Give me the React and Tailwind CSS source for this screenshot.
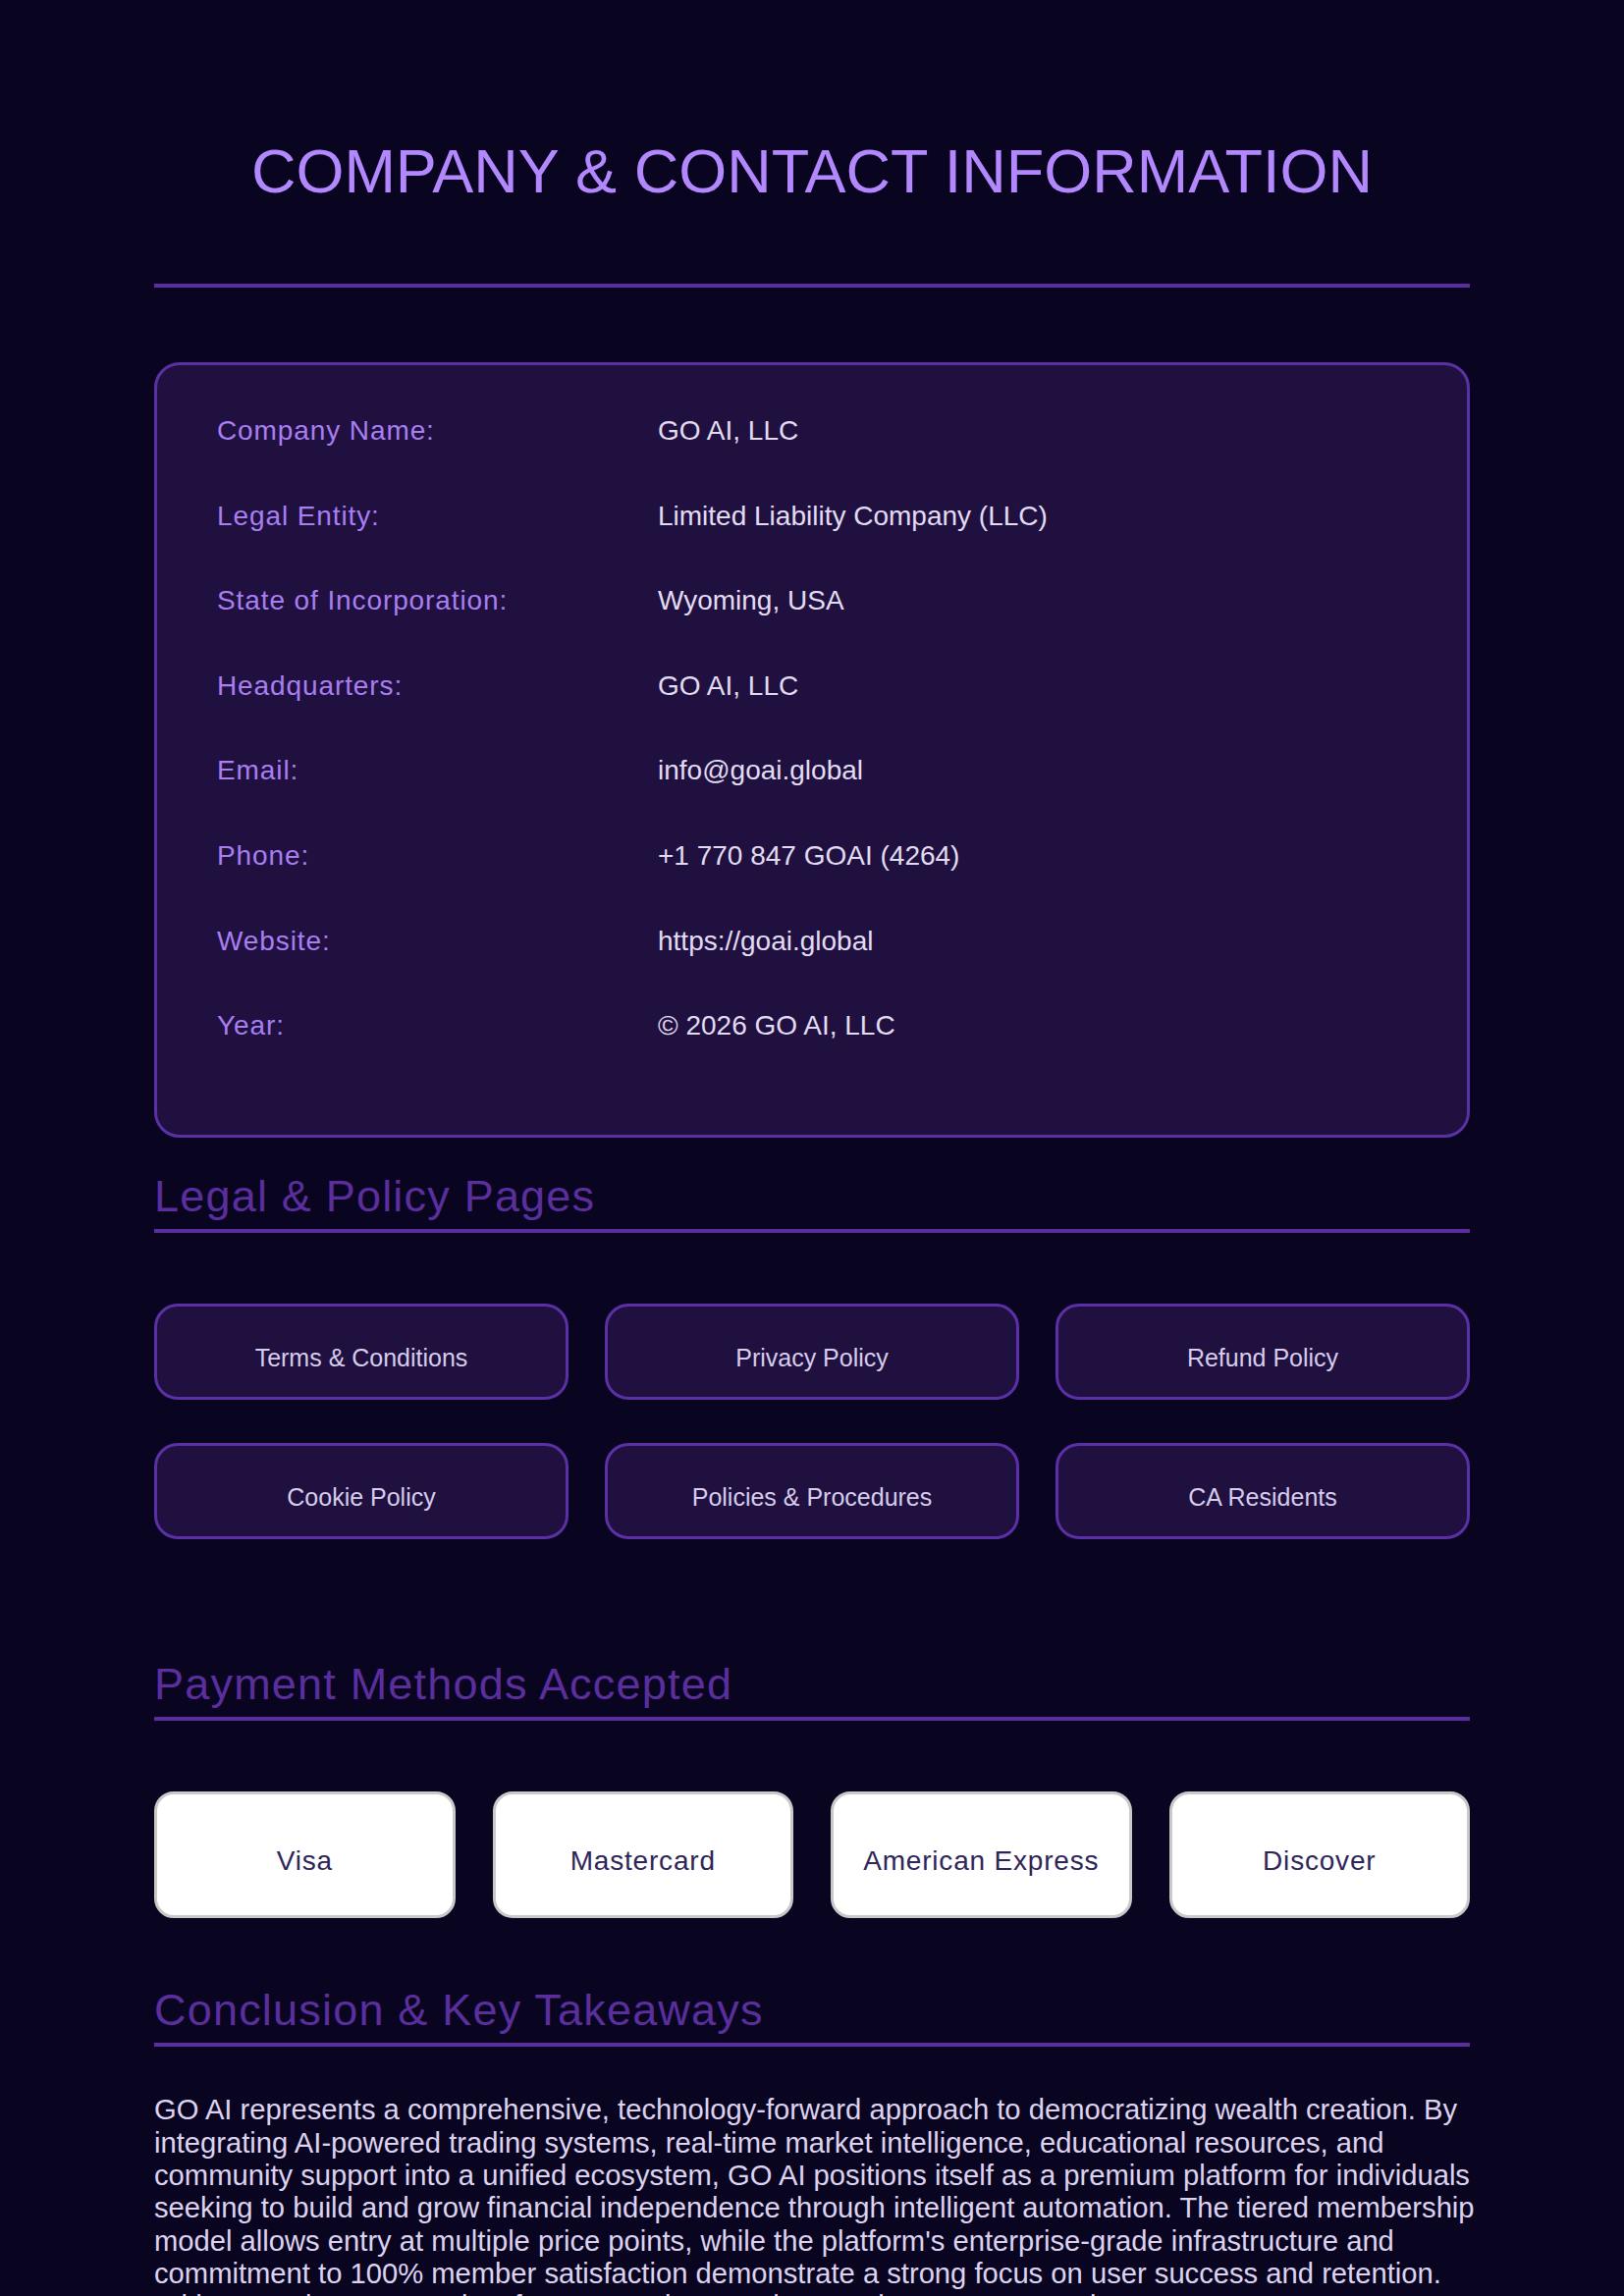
import React from "react";

const companyInfo = [
  ["Company Name:", "GO AI, LLC"],
  ["Legal Entity:", "Limited Liability Company (LLC)"],
  ["State of Incorporation:", "Wyoming, USA"],
  ["Headquarters:", "GO AI, LLC"],
  ["Email:", "info@goai.global"],
  ["Phone:", "+1 770 847 GOAI (4264)"],
  ["Website:", "https://goai.global"],
  ["Year:", "© 2026 GO AI, LLC"],
];

const policyPages = [
  "Terms & Conditions",
  "Privacy Policy",
  "Refund Policy",
  "Cookie Policy",
  "Policies & Procedures",
  "CA Residents",
];

const paymentMethods = ["Visa", "Mastercard", "American Express", "Discover"];

function SectionTitle({ children, className = "" }) {
  return (
    <h2
      className={`border-b-4 border-[#5a2ea0] pb-[6px] text-[45px] leading-[1.2] tracking-[1.2px] text-[#5b2e9e] ${className}`}
    >
      {children}
    </h2>
  );
}

export default function App() {
  return (
    <div className="min-h-screen bg-[#090520] font-['Liberation_Sans',Arial,sans-serif] pb-[120px]">
      <div className="mx-auto w-[1340px] pt-[137px]">
        <header className="border-b-4 border-[#5a2ea0] pb-[76px]">
          <h1 className="text-center text-[63px] leading-[1.2] text-[#b388ff]">
            COMPANY &amp; CONTACT INFORMATION
          </h1>
        </header>

        <section className="mt-[76px] rounded-[26px] border-[3px] border-[#5b30a6] bg-[#201040] px-[61px] pb-[68px] pt-[24px]">
          {companyInfo.map(([label, value]) => (
            <div
              key={label}
              className="grid h-[86.6px] grid-cols-[449px_1fr] items-center text-[28px] leading-[1.2]"
            >
              <span className="tracking-[0.9px] text-[#a87ef0]">{label}</span>
              <span className="text-[#e2dcf2]">{value}</span>
            </div>
          ))}
        </section>

        <SectionTitle className="mt-[33px]">Legal &amp; Policy Pages</SectionTitle>
        <div className="mt-[72px] grid grid-cols-3 gap-x-[37px] gap-y-[44px]">
          {policyPages.map((page) => (
            <a
              key={page}
              href="#"
              className="flex h-[98px] items-center justify-center rounded-[24px] border-[3px] border-[#5b30a6] bg-[#201040] pt-[12px] text-[25px] text-[#d6ccec]"
            >
              {page}
            </a>
          ))}
        </div>

        <SectionTitle className="mt-[121px]">Payment Methods Accepted</SectionTitle>
        <div className="mt-[72px] grid grid-cols-4 gap-x-[38px]">
          {paymentMethods.map((method) => (
            <div
              key={method}
              className="flex h-[129px] items-center justify-center rounded-[20px] border-[3px] border-[#c9c9c9] bg-white pt-[12px] text-[28px] tracking-[0.8px] text-[#2f2558]"
            >
              {method}
            </div>
          ))}
        </div>

        <SectionTitle className="mt-[67px]">Conclusion &amp; Key Takeaways</SectionTitle>
        <p className="mt-[48px] w-[1360px] text-[29.2px] leading-[33.3px] text-[#ddd3f0]">
          GO AI represents a comprehensive, technology-forward approach to
          democratizing wealth creation. By integrating AI-powered trading
          systems, real-time market intelligence, educational resources, and
          community support into a unified ecosystem, GO AI positions itself as
          a premium platform for individuals seeking to build and grow financial
          independence through intelligent automation. The tiered membership
          model allows entry at multiple price points, while the platform's
          enterprise-grade infrastructure and commitment to 100% member
          satisfaction demonstrate a strong focus on user success and retention.
          With a growing community of 1,000+ active members and a proven
          commitment to transparency, GO AI is well-positioned to lead the next
          generation of accessible, AI-driven financial tools.
        </p>
      </div>
    </div>
  );
}
